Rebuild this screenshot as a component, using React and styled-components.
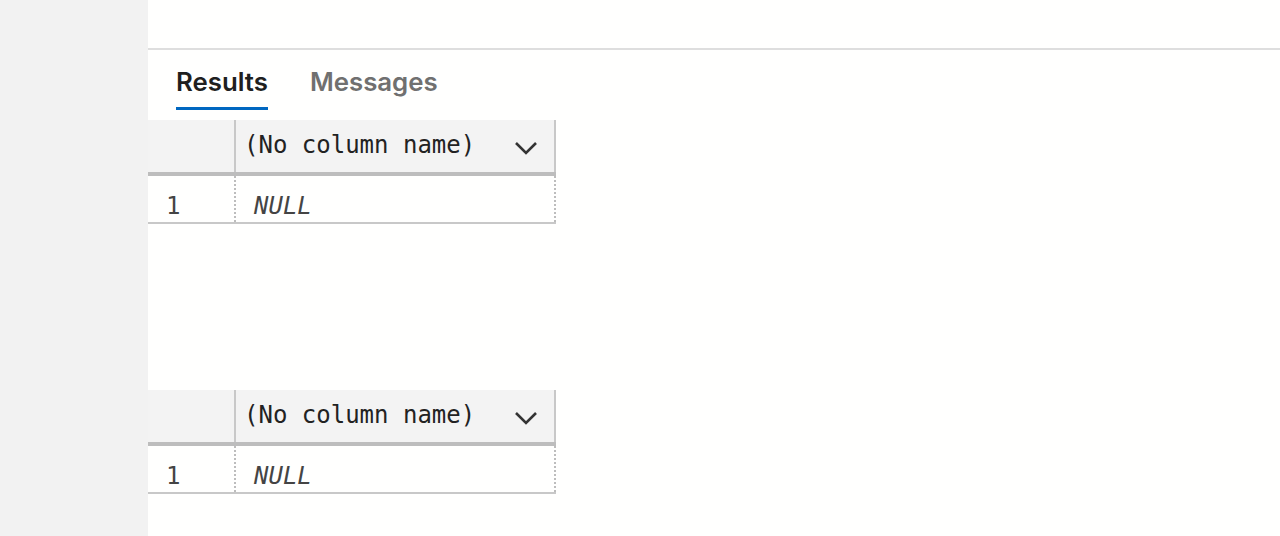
import React from "react";
import styled, { createGlobalStyle } from "styled-components";

const Global = createGlobalStyle`
  html, body { margin: 0; padding: 0; background: #ffffff; }
  #root { height: 536px; }
`;

const Page = styled.div`
  display: flex;
  width: 1280px;
  height: 536px;
  overflow: hidden;
`;

const Sidebar = styled.div`
  width: 148px;
  flex: none;
  background: #f2f2f2;
`;

const Main = styled.div`
  flex: 1;
  display: flex;
  flex-direction: column;
  background: #fffffe;
`;

const TopArea = styled.div`
  height: 48px;
  border-bottom: 2px solid #dedede;
`;

const TabBar = styled.div`
  display: flex;
  gap: 42px;
  padding-left: 28px;
`;

const Tab = styled.div`
  font-family: Inter, "Noto Sans", sans-serif;
  font-size: 25.8px;
  font-weight: 600;
  line-height: 30px;
  padding: 17px 0 10px;
  color: ${(p) => (p.$active ? "#1f1f1f" : "#707070")};
  border-bottom: 3px solid ${(p) => (p.$active ? "#0067c0" : "transparent")};
`;

const Grid = styled.div`
  width: 408px;
  margin-top: ${(p) => p.$top}px;
  font-family: "DejaVu Sans Mono", "Liberation Mono", monospace;
  font-size: 24px;
  color: #222;
`;

const HeaderRow = styled.div`
  display: flex;
  height: 52px;
  background: #f3f3f3;
  border-bottom: 4px solid #bdbdbd;
`;

const NumHeader = styled.div`
  width: 86px;
  border-right: 2px solid #c8c8c8;
`;

const ColHeader = styled.div`
  display: flex;
  align-items: center;
  justify-content: space-between;
  padding: 0 16px 0 8px;
  border-right: 2px solid #c8c8c8;
  box-sizing: content-box;
  width: 294px;
`;

const HeaderText = styled.span`
  line-height: 1;
  margin-top: -2px;
`;

const Chevron = styled.svg`
  width: 24px;
  height: 14px;
  margin-top: 4px;
`;

const DataRow = styled.div`
  display: flex;
  height: 46px;
  border-bottom: 2px solid #c8c8c8;
`;

const Cell = styled.div`
  padding-left: 18px;
  padding-top: 14px;
  display: flex;
  align-items: center;
  color: #444;
  border-right: 2px dotted #bdbdbd;
  box-sizing: border-box;
`;

const NumCell = styled(Cell)`
  width: 88px;
`;

const ValueCell = styled(Cell)`
  width: 320px;
  font-style: italic;
`;

function ResultGrid({ top }) {
  return (
    <Grid $top={top}>
      <HeaderRow>
        <NumHeader />
        <ColHeader>
          <HeaderText>(No column name)</HeaderText>
          <Chevron viewBox="0 0 24 14">
            <path d="M2 2 L12 12 L22 2" fill="none" stroke="#333" strokeWidth="2.6" />
          </Chevron>
        </ColHeader>
      </HeaderRow>
      <DataRow>
        <NumCell>1</NumCell>
        <ValueCell>NULL</ValueCell>
      </DataRow>
    </Grid>
  );
}

export default function App() {
  return (
    <Page>
      <Global />
      <Sidebar />
      <Main>
        <TopArea />
        <TabBar>
          <Tab $active>Results</Tab>
          <Tab>Messages</Tab>
        </TabBar>
        <ResultGrid top={10} />
        <ResultGrid top={166} />
      </Main>
    </Page>
  );
}
